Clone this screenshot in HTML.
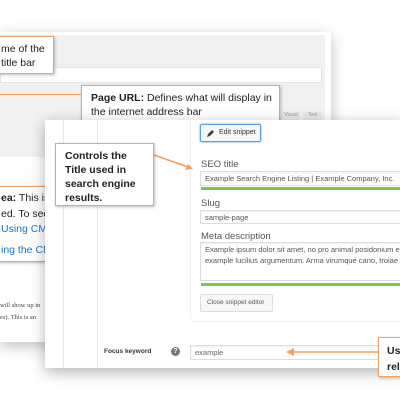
<!DOCTYPE html>
<html style="overflow:hidden"><head><meta charset="utf-8"><style>
*{margin:0;padding:0;box-sizing:border-box}
html,body{width:400px;height:400px;overflow:hidden}
body{background:#fff;position:relative;font-family:"Liberation Sans",sans-serif}
.a{position:absolute}
.co{position:absolute;background:#fff;border:1px solid #f0a060;box-shadow:1px 1px 3px rgba(0,0,0,.25);font-size:10.5px;line-height:14px;color:#222;padding:5px 9px;white-space:nowrap;overflow:hidden}
.lbl{position:absolute;font-size:9.5px;color:#555}
.inp{position:absolute;border:1px solid #ddd;background:#fff;font-size:7.5px;color:#555;padding:2px 4px;box-shadow:inset 0 1px 2px rgba(0,0,0,.07);white-space:nowrap;overflow:hidden}
.g{position:absolute;background:#7ac943;height:3px}
</style></head><body>
<div class="a" style="left:0;top:0;width:400px;height:400px;overflow:hidden">
<!-- back panel -->
<div class="a" style="left:0;top:32px;width:331px;height:310px;background:#fff;box-shadow:0 4px 14px rgba(0,0,0,.25)"></div>
<div class="a" style="left:0;top:35px;width:325px;height:85px;background:#f1f1f1"></div>
<div class="a" style="left:0;top:67px;width:322px;height:16px;background:#fff;border:1px solid #e5e5e5"></div>
<div class="a" style="left:282px;top:112px;width:18px;height:9px;background:#e8e8e8;font-size:5px;color:#999;text-align:center">Visual</div>
<div class="a" style="left:303px;top:112px;width:19px;height:9px;background:#e8e8e8;font-size:5px;color:#999;text-align:center">Text</div>
<div class="a" style="left:0;top:120px;width:45px;height:37px;background:#f1f1f1"></div>
<div class="a" style="left:0;top:300px;font-family:'Liberation Serif',serif;font-size:6.5px;color:#444;line-height:12px;white-space:nowrap">will show up in<br>es). This is an</div>
<div class="co" style="left:-20px;top:186px;width:66px;height:76px;padding-left:20px;padding-top:4px;line-height:15.5px"><b>ea:</b> This is<br>ed. To see<br><span style="color:#1a73c8">Using CMS</span><br><span style="color:#1a73c8;line-height:24px">ing the CM</span></div>
<div class="co" style="left:-20px;top:36px;width:74px;height:38px;padding-left:20px;padding-top:5px">me of the<br>title bar</div>
<div class="a" style="left:0;top:94px;width:82px;height:1px;background:#f0a060"></div>
<div class="co" style="left:81px;top:85px;width:199px;height:38px;padding-top:5px"><b>Page URL:</b> Defines what will display in<br>the internet address bar</div>
<!-- front panel -->
<div class="a" style="left:45px;top:120px;width:360px;height:248px;background:#fff;box-shadow:0 4px 14px rgba(0,0,0,.3)"></div>
<div class="a" style="left:63px;top:120px;width:1px;height:248px;background:#e8e8e8"></div>
<div class="a" style="left:97px;top:120px;width:1px;height:248px;background:#e8e8e8"></div>
<div class="a" style="left:190px;top:110px;width:220px;height:212px;border-left:1px solid #eee;border-bottom:1px solid #eee;border-bottom-left-radius:6px"></div>
<div class="a" style="left:200px;top:124px;width:61px;height:18px;border:1px solid #5b9dd9;border-radius:2px;background:#f7f7f7;box-shadow:0 0 2px #5b9dd9;font-size:7px;color:#333;padding:4px 0 0 18px;white-space:nowrap">Edit snippet</div>
<svg class="a" style="left:206px;top:129px" width="9" height="9"><path d="M1 8 L2 5 L6 1 L8 3 L4 7 Z" fill="#444"/></svg>
<div class="lbl" style="left:201px;top:159px">SEO title</div>
<div class="inp" style="left:200px;top:171px;width:210px;height:15px">Example Search Engine Listing | Example Company, Inc.</div>
<div class="g" style="left:201px;top:187px;width:210px"></div>
<div class="lbl" style="left:201px;top:198px">Slug</div>
<div class="inp" style="left:200px;top:210px;width:210px;height:14px">sample-page</div>
<div class="lbl" style="left:201px;top:231px">Meta description</div>
<div class="inp" style="left:200px;top:242px;width:210px;height:39px;line-height:10.5px">Example ipsum dolor sit amet, no pro animal posidonium e<br>example lucilius argumentum. Arma virumque cano, troiae</div>
<div class="g" style="left:201px;top:283px;width:210px"></div>
<div class="a" style="left:200px;top:294px;width:73px;height:18px;border:1px solid #ddd;border-radius:2px;background:#f7f7f7;font-size:6.5px;color:#555;padding:4px 0 0 6px;white-space:nowrap">Close snippet editor</div>
<div class="a" style="left:104px;top:348px;font-size:6.5px;font-weight:bold;color:#333;white-space:nowrap">Focus keyword</div>
<div class="a" style="left:171px;top:347px;width:9px;height:9px;border-radius:50%;background:#777;color:#fff;font-size:7px;font-weight:bold;text-align:center;line-height:9px">?</div>
<div class="inp" style="left:190px;top:345px;width:220px;height:15px;font-size:7.5px;color:#666">example</div>
<svg class="a" style="left:0;top:0" width="400" height="400">
<line x1="154" y1="155" x2="188" y2="167" stroke="#f0a060" stroke-width="1.5"/>
<path d="M193 169 L185 170 L188 164 Z" fill="#f0a060"/>
<line x1="293" y1="352" x2="380" y2="352" stroke="#f0a060" stroke-width="1.5"/>
<path d="M286 352 L294 348 L294 356 Z" fill="#f0a060"/>
</svg>
<div class="co" style="left:55px;top:143px;width:99px;height:63px;font-weight:bold;padding-top:5px">Controls the<br>Title used in<br>search engine<br>results.</div>
<div class="co" style="left:378px;top:337px;width:40px;height:40px;font-weight:bold;padding-top:5px;padding-left:8px;line-height:16px">Us<br>rel</div>
</div>
</body></html>
